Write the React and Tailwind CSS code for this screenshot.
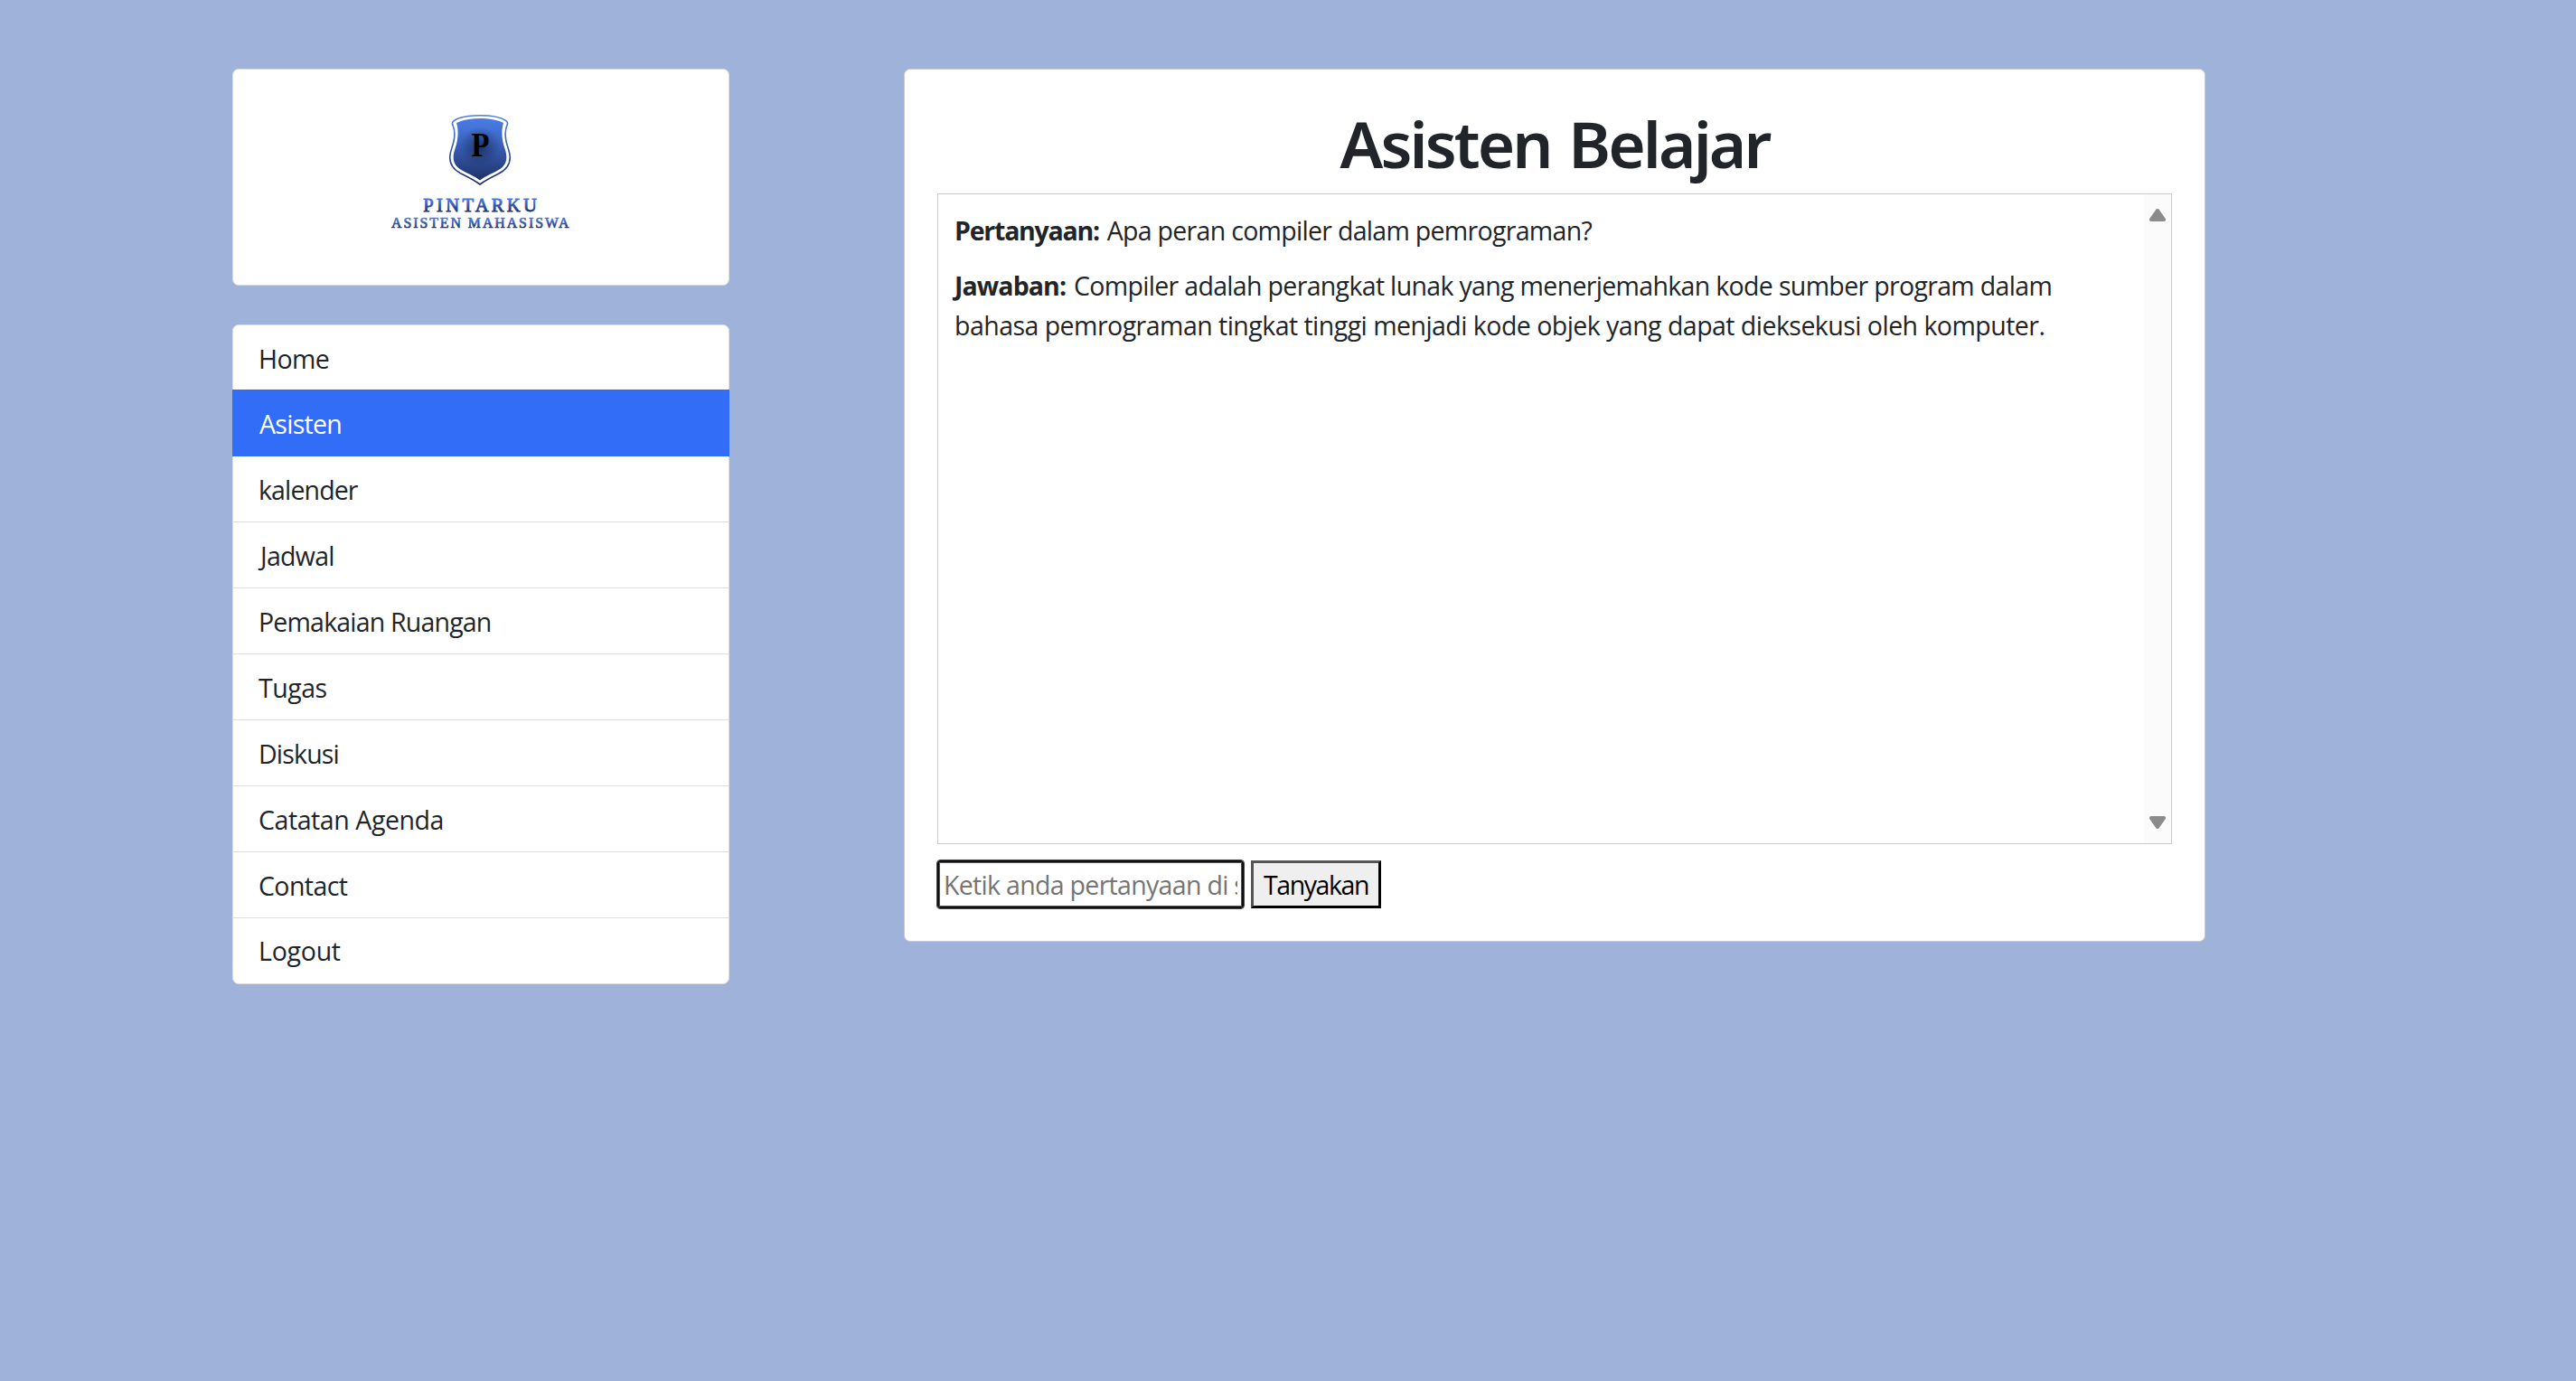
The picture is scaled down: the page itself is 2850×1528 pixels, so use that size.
const menu = [
  { label: "Home", cls: "h-[71px] pt-[15px] pl-[28px] tracking-[-0.6px]" },
  { label: "Asisten", active: true, cls: "tracking-[-0.7px]" },
  { label: "kalender", cls: "h-[73px] border-b pt-[15px] pl-[28px] tracking-[-0.87px]" },
  { label: "Jadwal", cls: "h-[73px] border-b pt-[15px] pl-[30px] tracking-[-0.7px]" },
  { label: "Pemakaian Ruangan", cls: "h-[73px] border-b pt-[15px] pl-[28px] tracking-[-0.81px]" },
  { label: "Tugas", cls: "h-[73px] border-b pt-[15px] pl-[28px] tracking-[-0.5px]" },
  { label: "Diskusi", cls: "h-[73px] border-b pt-[15px] pl-[28px] tracking-[-0.82px]" },
  { label: "Catatan Agenda", cls: "h-[73px] border-b pt-[15px] pl-[28px] tracking-[-0.42px]" },
  { label: "Contact", cls: "h-[73px] border-b pt-[15px] pl-[28px] tracking-[-0.58px]" },
  { label: "Logout", cls: "h-[72px] pt-[14px] pl-[28px] tracking-[-0.25px]" },
];

function Logo() {
  return (
    <svg width="220" height="150" viewBox="0 0 220 150" aria-label="Pintarku">
      <defs>
        <linearGradient id="shield" x1="0" y1="17" x2="0" y2="95" gradientUnits="userSpaceOnUse">
          <stop offset="0" stopColor="#4c7ee8" />
          <stop offset="0.2" stopColor="#4473d8" />
          <stop offset="0.6" stopColor="#2f509c" />
          <stop offset="1" stopColor="#1c2c5c" />
        </linearGradient>
        <linearGradient id="title" x1="0" y1="0" x2="0" y2="1">
          <stop offset="0.25" stopColor="#4675dc" />
          <stop offset="0.8" stopColor="#1f3470" />
        </linearGradient>
        <radialGradient id="glow" cx="111" cy="52" r="22" gradientUnits="userSpaceOnUse">
          <stop offset="0" stopColor="#0b1430" stopOpacity="0.6" />
          <stop offset="0.5" stopColor="#14224a" stopOpacity="0.32" />
          <stop offset="1" stopColor="#14224a" stopOpacity="0" />
        </radialGradient>
      </defs>
      <path
        d="M111 17.7C122 17.7 134 19.6 139.5 23.3C142 25 142 27 140.8 29C137.6 37 139 45 142.2 54C147 67 143.500 76.500 131 82.500C122 87 115.500 90.500 111 94C106.500 90.500 100 87 91 82.500C78.500 76.500 75 67 79.800 54C83 45 84.400 37 81.200 29C80 27 80 25 82.500 23.300C88 19.600 100 17.700 111 17.700Z"
        fill="#fff"
        stroke="url(#shield)"
        strokeWidth="1.6"
      />
      <path
        d="M111 21C121 21 131 22.800 137 26C134 36 135.500 46 138.700 55C142.500 66.500 140 74 129 79.500C121 83.500 115.500 86 111 89.500C106.500 86 101 83.500 93 79.500C82 74 79.500 66.500 83.300 55C86.500 46 88 36 85 26C91 22.800 101 21 111 21Z"
        fill="url(#shield)"
      />
      <circle cx="111" cy="52" r="22" fill="url(#glow)" />
      <text x="101.500" y="63" fontFamily="Liberation Serif, serif" fontWeight="700" fontSize="37" textLength="20" lengthAdjust="spacingAndGlyphs">P</text>
      <g fontFamily="Liberation Serif, serif" fill="url(#title)" stroke="url(#title)" strokeWidth="0.85">
        <text x="48.300" y="124" fontSize="20.500" textLength="125.500">PINTARKU</text>
        <text x="13" y="142" fontSize="15.800" textLength="196.500" strokeWidth="0.65">ASISTEN MAHASISWA</text>
      </g>
    </svg>
  );
}

export default function App() {
  return (
    <div className="flex h-[1528px] w-[2850px] items-start bg-[#9fb2d9] pt-[76px] pl-[257px] font-['Open_Sans','Noto_Sans',sans-serif] text-[28.5px] leading-[44px] text-[#212529]">
      <aside className="flex w-[550px] flex-col gap-[43px]">
        <div className="flex h-[240px] justify-center rounded-[7px] border border-[#d9dbdf] bg-white pt-[33px] pr-[4px]">
          <Logo />
        </div>
        <ul className="rounded-[7px] border border-[#dbdde1] bg-white">
          {menu.map((m) =>
            m.active ? (
              <li key={m.label} className="-mx-px h-[74px] bg-[#316df6] pt-[16px] pl-[30px] text-white">
                <span className={m.cls}>{m.label}</span>
              </li>
            ) : (
              <li key={m.label} className={"border-[#dedfe0] " + m.cls}>
                {m.label}
              </li>
            )
          )}
        </ul>
      </aside>

      <main className="ml-[193px] flex h-[966px] w-[1440px] flex-col rounded-[7px] border border-[#cccccc] bg-white px-[36px] pt-[38px]">
        <h1 className="h-[99px] text-center font-['Noto_Sans',sans-serif] text-[71px] leading-[88px] font-semibold tracking-[-2.9px] [word-spacing:4px]">
          Asisten Belajar
        </h1>
        <section className="flex h-[720px] w-[1366px] justify-between border border-[#cccccc]">
          <div className="pt-[18px] pl-[18px] whitespace-nowrap">
            <p className="mb-[17px] tracking-[-0.7px]">
              <b className="mr-[2px] tracking-[-1.23px]">Pertanyaan:</b> Apa peran compiler dalam pemrograman?
            </p>
            <p className="tracking-[-0.67px]">
              <b className="mr-[2px] tracking-[-0.9px]">Jawaban:</b> Compiler adalah perangkat lunak yang menerjemahkan kode sumber program dalam
              <br />
              <span className="tracking-[-0.53px]">
                bahasa pemrograman tingkat tinggi menjadi kode objek yang dapat dieksekusi oleh komputer.
              </span>
            </p>
          </div>
          <div className="flex w-[30px] flex-col items-center justify-between bg-[#fbfbfb] pt-[16px] pb-[16px]">
            <svg width="18" height="14" viewBox="0 0 18 14">
              <path d="M9 2L16 12H2Z" fill="#8b8b8b" stroke="#8b8b8b" strokeWidth="4" strokeLinejoin="round" />
            </svg>
            <svg width="18" height="14" viewBox="0 0 18 14">
              <path d="M9 12L16 2H2Z" fill="#8b8b8b" stroke="#8b8b8b" strokeWidth="4" strokeLinejoin="round" />
            </svg>
          </div>
        </section>
        <div className="mt-[18px] flex gap-[8px]">
          <input
            className="h-[53px] w-[339px] rounded-[3px] border-2 border-[#101010] pr-[5px] pl-[5px] tracking-[-0.69px] shadow-[inset_0_0_0_1px_#555555] outline outline-[#444444] placeholder:text-[#757575] placeholder:opacity-100"
            placeholder="Ketik anda pertanyaan di sini"
          />
          <button className="h-[53px] w-[144px] border-3 border-t-[#555555] border-r-black border-b-black border-l-[#555555] bg-[#efefef] leading-[44px] tracking-[-1.43px] whitespace-nowrap text-black">
            Tanyakan
          </button>
        </div>
      </main>
    </div>
  );
}
